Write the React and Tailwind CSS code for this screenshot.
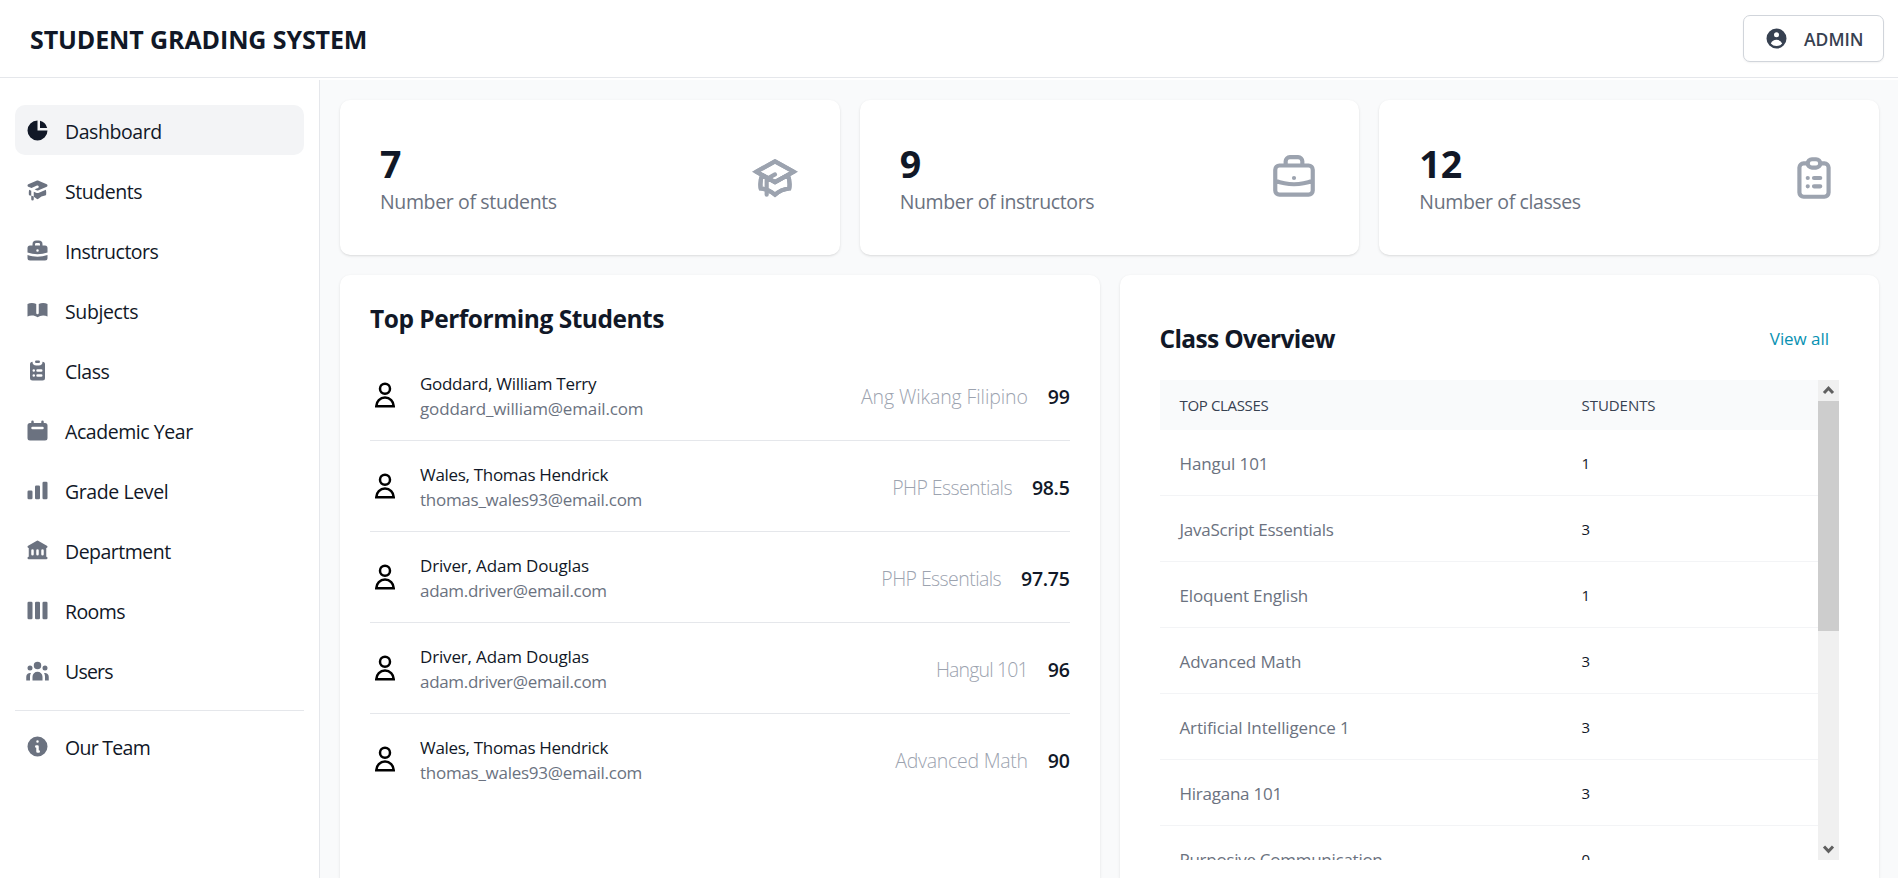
import React from "react";
import {
  HiAcademicCap,
  HiBookOpen,
  HiBriefcase,
  HiCalendar,
  HiChartBar,
  HiChartPie,
  HiClipboardList,
  HiInformationCircle,
  HiLibrary,
  HiOutlineAcademicCap,
  HiOutlineBriefcase,
  HiOutlineClipboardList,
  HiUserCircle,
  HiUserGroup,
  HiViewBoards,
} from "react-icons/hi";

const NAV = [
  { label: "Dashboard", icon: HiChartPie, tracking: "tracking-[-0.44px]", active: true },
  { label: "Students", icon: HiAcademicCap, tracking: "tracking-[-0.45px]" },
  { label: "Instructors", icon: HiBriefcase, tracking: "tracking-[-0.5px]" },
  { label: "Subjects", icon: HiBookOpen, tracking: "tracking-[-0.37px]" },
  { label: "Class", icon: HiClipboardList, tracking: "tracking-[-0.46px]" },
  { label: "Academic Year", icon: HiCalendar, tracking: "tracking-[-0.44px]" },
  { label: "Grade Level", icon: HiChartBar, tracking: "tracking-[-0.4px]" },
  { label: "Department", icon: HiLibrary, tracking: "tracking-[-0.5px]" },
  { label: "Rooms", icon: HiViewBoards, tracking: "tracking-[-0.58px]" },
  { label: "Users", icon: HiUserGroup, tracking: "tracking-[-0.8px]" },
];

const STATS = [
  { value: "7", label: "Number of students", icon: HiOutlineAcademicCap, tracking: "tracking-[-0.36px]" },
  { value: "9", label: "Number of instructors", icon: HiOutlineBriefcase, tracking: "tracking-[-0.37px]" },
  { value: "12", label: "Number of classes", icon: HiOutlineClipboardList, tracking: "tracking-[-0.38px]" },
];

const GODDARD = { name: "Goddard, William Terry", nameTracking: "tracking-[-0.3px]", email: "goddard_william@email.com", emailTracking: "tracking-[-0.15px]" };
const WALES = { name: "Wales, Thomas Hendrick", nameTracking: "tracking-[-0.31px]", email: "thomas_wales93@email.com", emailTracking: "tracking-[-0.27px]" };
const DRIVER = { name: "Driver, Adam Douglas", nameTracking: "tracking-[-0.16px]", email: "adam.driver@email.com", emailTracking: "tracking-[-0.31px]" };

const TOP_STUDENTS = [
  { ...GODDARD, subject: "Ang Wikang Filipino", subjectTracking: "tracking-[-0.1px]", grade: "99" },
  { ...WALES, subject: "PHP Essentials", subjectTracking: "tracking-[-0.58px]", grade: "98.5" },
  { ...DRIVER, subject: "PHP Essentials", subjectTracking: "tracking-[-0.58px]", grade: "97.75" },
  { ...DRIVER, subject: "Hangul 101", subjectTracking: "tracking-[-0.85px]", grade: "96" },
  { ...WALES, subject: "Advanced Math", subjectTracking: "tracking-[-0.27px]", grade: "90" },
];

const CLASSES = [
  { name: "Hangul 101", count: 1, tracking: "tracking-[-0.1px]" },
  { name: "JavaScript Essentials", count: 3, tracking: "tracking-[-0.25px]" },
  { name: "Eloquent English", count: 1, tracking: "tracking-[-0.18px]" },
  { name: "Advanced Math", count: 3, tracking: "tracking-[-0.12px]" },
  { name: "Artificial Intelligence 1", count: 3, tracking: "tracking-[-0.13px]" },
  { name: "Hiragana 101", count: 3, tracking: "tracking-[-0.25px]" },
  { name: "Purposive Communication", count: 0, tracking: "tracking-[-0.27px]" },
];

function NavItem({ icon: Icon, label, tracking, active }) {
  return (
    <a
      className={`flex h-[50px] items-center rounded-[10px] p-2.5 text-gray-900 ${active ? "bg-[#f3f4f6]" : ""}`}
    >
      <Icon className={`size-[25px] shrink-0 ${active ? "text-[#111827]" : "text-[#6b7280]"}`} />
      <span className={`ml-[15px] pt-[4px] text-[19.5px] leading-[30px] text-[#111827] ${tracking}`}>{label}</span>
    </a>
  );
}

function PersonIcon() {
  return (
    <svg viewBox="0 0 24 24" className="size-[30px] shrink-0" fill="none" stroke="#000" strokeWidth="2">
      <circle cx="12" cy="7" r="4" />
      <path d="M5 21a7 7 0 0 1 14 0z" />
    </svg>
  );
}

function ScrollArrow({ down }) {
  return (
    <svg viewBox="0 0 21 21" className="size-[21px]" fill="none" stroke="#606060" strokeWidth="3">
      <path d={down ? "M6 7.5l4.5 4.8 4.5-4.8" : "M6 13l4.5-4.8 4.5 4.8"} />
    </svg>
  );
}

function Header() {
  return (
    <header className="flex h-[78px] shrink-0 items-center justify-between border-b border-[#e5e7eb] bg-white pl-[30px] pr-[14px]">
      <h1 className="pt-[2px] text-[25px] font-bold tracking-[-0.11px] text-[#111827]">STUDENT GRADING SYSTEM</h1>
      <button className="flex h-[47px] w-[141px] items-center rounded-[7px] border border-[#d1d5db] bg-white pl-5 shadow-xs">
        <HiUserCircle className="size-[25px] text-[#374151]" />
        <span className="ml-[15px] pt-[2px] text-[17.5px] font-semibold tracking-[0px] text-[#374151]">ADMIN</span>
      </button>
    </header>
  );
}

function Sidebar() {
  return (
    <aside className="w-[320px] shrink-0 border-r border-[#e5e7eb] bg-white px-[15px] pt-[25px]">
      <nav className="flex flex-col gap-2.5">
        {NAV.map((item) => (
          <NavItem key={item.label} {...item} />
        ))}
      </nav>
      <div className="mt-[15px] border-t border-[#e5e7eb] pt-[10px]">
        <NavItem icon={HiInformationCircle} label="Our Team" tracking="tracking-[-0.72px]" />
      </div>
    </aside>
  );
}

function StatCard({ value, label, icon: Icon, tracking }) {
  return (
    <div className="flex h-[155px] items-center justify-between rounded-[10px] bg-white px-10 shadow-[0_1px_3px_0_rgb(0_0_0/0.1),0_1px_2px_-1px_rgb(0_0_0/0.1)]">
      <div className="pt-[7px]">
        <div className="text-[37.5px] font-bold leading-[38px] text-[#111827]">{value}</div>
        <div className={`pt-[4px] text-[19.5px] leading-[30px] text-[#6b7280] ${tracking}`}>{label}</div>
      </div>
      <Icon className="size-[50px] text-[#9ca3af]" />
    </div>
  );
}

function TopStudents() {
  return (
    <section className="rounded-t-[10px] bg-white px-[30px] pt-[29px] shadow-[0_1px_3px_0_rgb(0_0_0/0.1)]">
      <h2 className="h-[46px] text-[24.5px] font-bold leading-[29px] tracking-[-0.48px] text-[#111827]">
        Top Performing Students
      </h2>
      <ul>
        {TOP_STUDENTS.map((s, i) => (
          <li key={i} className="flex h-[91px] items-center border-b border-[#e5e7eb] last:border-transparent">
            <PersonIcon />
            <div className="ml-5 min-w-0 flex-1 pt-[2px] text-[17px] leading-[25px]">
              <p className={`text-[#111827] ${s.nameTracking}`}>{s.name}</p>
              <p className={`text-[#6b7280] ${s.emailTracking}`}>{s.email}</p>
            </div>
            <div className="flex items-center gap-5 pt-[4px] text-[19.5px] leading-[30px]">
              <span className={`font-light text-[#9ca3af] ${s.subjectTracking}`}>{s.subject}</span>
              <span className="font-semibold tracking-[-0.3px] text-[#111827]">{s.grade}</span>
            </div>
          </li>
        ))}
      </ul>
    </section>
  );
}

function ClassOverview() {
  return (
    <section className="rounded-t-[10px] bg-white px-10 pt-[45px] shadow-[0_1px_3px_0_rgb(0_0_0/0.1)]">
      <div className="flex h-[60px] items-start justify-between">
        <h2 className="pt-[4px] text-[24.5px] font-bold leading-[30px] tracking-[-0.66px] text-[#111827]">Class Overview</h2>
        <a className="p-2.5 pt-[6px] text-[17px] leading-[25px] tracking-[-0.05px] text-[#0891b2]">View all</a>
      </div>
      <div className="flex h-[480px] overflow-hidden">
        <div className="min-w-0 flex-1">
          <div className="grid h-[50px] grid-cols-[402px_1fr] items-center bg-[#f9fafb] pl-5 pt-[1px] text-[15px] font-medium text-[#374151]">
            <span className="tracking-[-0.35px]">TOP CLASSES</span>
            <span className="tracking-[-0.05px]">STUDENTS</span>
          </div>
          <div>
            {CLASSES.map((c) => (
              <div key={c.name} className="grid h-[66px] grid-cols-[402px_1fr] items-center border-b border-[#f3f4f6] pl-5 pt-[2px]">
                <span className={`text-[17px] text-[#6b7280] ${c.tracking}`}>{c.name}</span>
                <span className="text-[15px] text-[#111827]">{c.count}</span>
              </div>
            ))}
          </div>
        </div>
        <div className="flex w-[21px] shrink-0 flex-col bg-[#f0f0f0]">
          <ScrollArrow />
          <div className="h-[230px] bg-[#cdcdcd]" />
          <div className="flex-1" />
          <ScrollArrow down />
        </div>
      </div>
    </section>
  );
}

export default function App() {
  return (
    <div className="flex h-[878px] flex-col overflow-hidden bg-white font-['Open_Sans','Noto_Sans',sans-serif]">
      <Header />
      <div className="mt-[2px] flex min-h-0 flex-1">
        <Sidebar />
        <main className="flex min-w-0 flex-1 flex-col gap-5 bg-[#f9fafb] pl-5 pr-[19px] pt-5">
          <div className="grid grid-cols-3 gap-5">
            {STATS.map((s) => (
              <StatCard key={s.label} {...s} />
            ))}
          </div>
          <div className="grid min-h-0 flex-1 grid-cols-2 gap-5">
            <TopStudents />
            <ClassOverview />
          </div>
        </main>
      </div>
    </div>
  );
}
